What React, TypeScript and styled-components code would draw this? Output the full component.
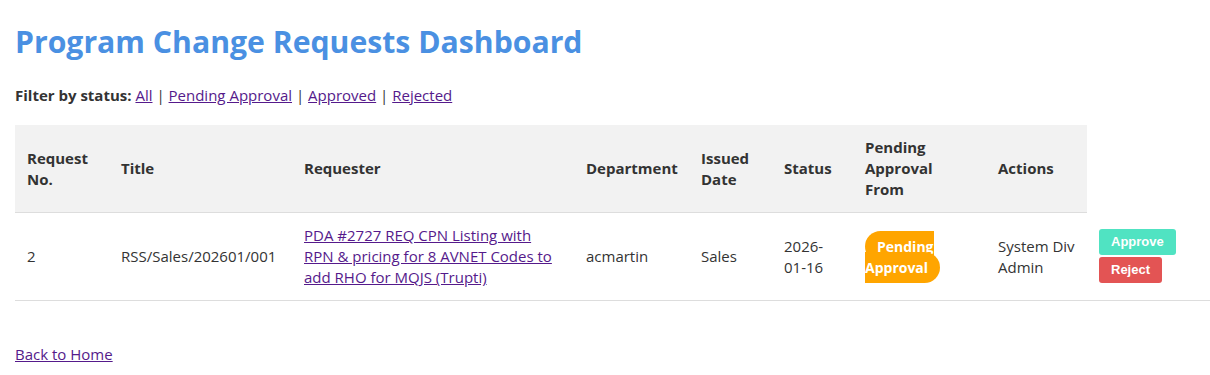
import * as React from "react";
import styled, { createGlobalStyle } from "styled-components";

const GlobalStyle = createGlobalStyle`
  html, body {
    margin: 0;
    padding: 0;
    background: #ffffff;
  }
  body {
    font-family: "Open Sans", "Noto Sans", sans-serif;
    font-size: 15px;
    line-height: 21px;
    color: #333333;
  }
`;

const Page = styled.div`
  padding: 22px 0 0 15px;
`;

const Title = styled.h1`
  margin: 0;
  font-size: 30.2px;
  line-height: 40px;
  font-weight: 700;
  color: #4a90e2;
`;

const FilterBar = styled.div`
  margin-top: 23px;
`;

const FilterLabel = styled.strong`
  font-weight: 700;
`;

const Link = styled.a`
  color: #551a8b;
  text-decoration: underline;
  cursor: pointer;
`;

const Table = styled.table`
  margin-top: 19px;
  width: 100%;
  border-collapse: collapse;
  table-layout: fixed;
`;

const HeadCell = styled.th`
  padding: 12px;
  background: #f2f2f2;
  border-bottom: 1px solid #dddddd;
  text-align: left;
  vertical-align: middle;
  font-weight: 700;
`;

const Cell = styled.td`
  padding: 12px;
  border-bottom: 1px solid #dddddd;
  vertical-align: middle;
`;

const StatusBadge = styled.span<{ $tone: string }>`
  padding: 6px 12px;
  border-radius: 16px;
  background: ${(p) => p.$tone};
  color: #ffffff;
  font-size: 14px;
  font-weight: 700;
`;

const ActionGroup = styled.div`
  display: flex;
  flex-wrap: wrap;
  gap: 2px 4px;
  align-items: flex-start;
`;

const ActionButton = styled.button<{ $variant: "approve" | "reject" }>`
  border: none;
  border-radius: 3px;
  padding: 5px 12px;
  font-family: "Liberation Sans", Arial, sans-serif;
  font-size: 13px;
  line-height: 16px;
  font-weight: 700;
  color: #ffffff;
  background: ${(p) => (p.$variant === "approve" ? "#50e3c2" : "#e35454")};
  cursor: pointer;
`;

const BackLink = styled.div`
  margin-top: 43px;
`;

const columns = [94, 183, 282, 115, 83, 81, 133, 101, 123];

const headers = [
  "Request No.",
  "Title",
  "Requester",
  "Department",
  "Issued Date",
  "Status",
  "Pending Approval From",
  "Actions",
];

const requests = [
  {
    id: 2,
    number: "RSS/Sales/202601/001",
    title: "PDA #2727 REQ CPN Listing with RPN & pricing for 8 AVNET Codes to add RHO for MQJS (Trupti)",
    requester: "acmartin",
    department: "Sales",
    issued: "2026-01-16",
    status: "Pending Approval",
    pendingFrom: "System Div Admin",
  },
];

export default function App() {
  return (
    <Page>
      <GlobalStyle />
      <Title>Program Change Requests Dashboard</Title>
      <FilterBar>
        <FilterLabel>Filter by status:</FilterLabel> <Link>All</Link> |{" "}
        <Link>Pending Approval</Link> | <Link>Approved</Link> |{" "}
        <Link>Rejected</Link>
      </FilterBar>
      <Table>
        <colgroup>
          {columns.map((w, i) => (
            <col key={i} style={{ width: w }} />
          ))}
        </colgroup>
        <thead>
          <tr>
            {headers.map((h) => (
              <HeadCell key={h}>{h}</HeadCell>
            ))}
          </tr>
        </thead>
        <tbody>
          {requests.map((r) => (
            <tr key={r.id}>
              <Cell>{r.id}</Cell>
              <Cell>{r.number}</Cell>
              <Cell>
                <Link>{r.title}</Link>
              </Cell>
              <Cell>{r.requester}</Cell>
              <Cell>{r.department}</Cell>
              <Cell>{r.issued}</Cell>
              <Cell>
                <StatusBadge $tone="#ffa500">{r.status}</StatusBadge>
              </Cell>
              <Cell>{r.pendingFrom}</Cell>
              <Cell>
                <ActionGroup>
                  <ActionButton $variant="approve">Approve</ActionButton>
                  <ActionButton $variant="reject">Reject</ActionButton>
                </ActionGroup>
              </Cell>
            </tr>
          ))}
        </tbody>
      </Table>
      <BackLink>
        <Link>Back to Home</Link>
      </BackLink>
    </Page>
  );
}
